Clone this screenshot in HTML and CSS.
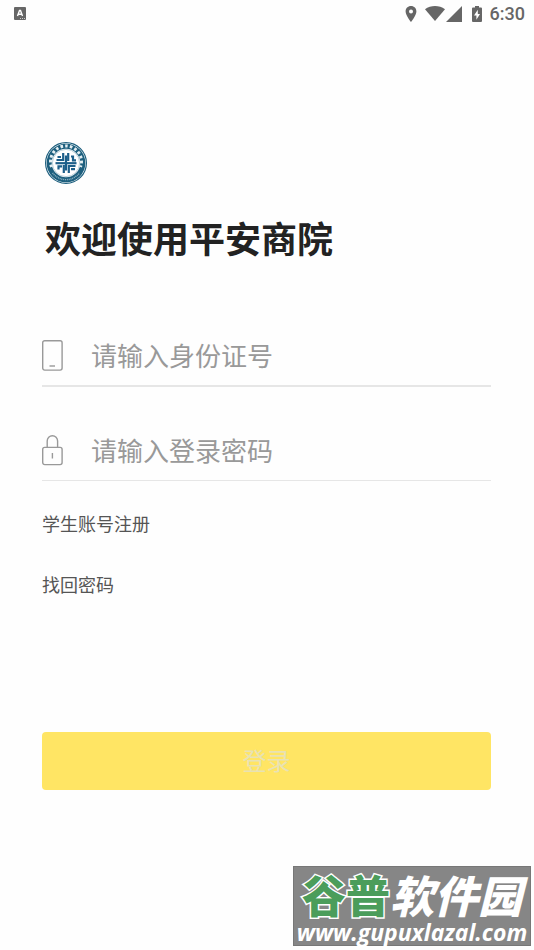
FILE: index.html
```
<!DOCTYPE html>
<html lang="zh-CN">
<head>
    <meta charset="UTF-8">
    <meta name="viewport" content="width=device-width, initial-scale=1.0">
    <title>平安商院</title>
    <link rel="stylesheet" href="styles.css">
</head>
<body>
    <!-- 状态栏 -->
    <header class="status-bar">
        <svg class="status-app" width="12" height="13" viewBox="0 0 12 13">
            <rect width="12" height="13" rx="1" fill="#666"/>
            <path d="M3.5 9 L5.5 3.5 H6.5 L8.5 9 M4.5 7.2 H7.5" fill="none" stroke="#fff" stroke-width="1.4"/>
            <path d="M6 11.5 H11" stroke="#ccc" stroke-width="1" stroke-dasharray="1 1"/>
        </svg>
        <div class="status-icons">
            <svg width="12" height="16" viewBox="0 0 12 16">
                <path d="M6 0 C2.8 0 .6 2.4 .6 5.4 C.6 9.4 6 16 6 16 S11.4 9.4 11.4 5.4 C11.4 2.4 9.2 0 6 0 Z M6 3.4 A2 2 0 1 1 6 7.4 A2 2 0 1 1 6 3.4 Z" fill="#666" fill-rule="evenodd"/>
            </svg>
            <svg class="wifi" width="20" height="15" viewBox="0 0 20 15">
                <path d="M0 3.2 C5.8 -1 14.2 -1 20 3.2 L10 15 Z" fill="#666"/>
            </svg>
            <svg class="signal" width="16" height="16" viewBox="0 0 16 16">
                <path d="M16 0 V16 H0 Z" fill="#666"/>
            </svg>
            <svg class="battery" width="10" height="16" viewBox="0 0 10 16">
                <path d="M3 0 H7 V1.6 H9 Q10 1.6 10 2.6 V15 Q10 16 9 16 H1 Q0 16 0 15 V2.6 Q0 1.6 1 1.6 H3 Z" fill="#666"/>
                <path d="M5.8 3.8 L2 9.6 H4.4 V13.8 L8 8 H5.8 Z" fill="#fff"/>
            </svg>
            <span class="clock">6:30</span>
        </div>
    </header>

    <main class="login">
        <!-- 校徽 -->
        <svg class="logo" width="42" height="42" viewBox="0 0 42 42">
            <circle cx="21" cy="21" r="20.4" fill="#fff" stroke="#1d5f7e" stroke-width="1.2"/>
            <circle cx="21" cy="21" r="16.8" fill="none" stroke="#1d5f7e" stroke-width="5"/>
            <path d="M6.5 26 A15.5 15.5 0 1 1 35.5 26" transform="translate(0 -1)" fill="none" stroke="#e4eef2" stroke-width="3" stroke-dasharray="2.6 2.2"/>
            <path d="M7.6 31 A16.8 16.8 0 0 0 34.4 31" fill="none" stroke="#8fb2c2" stroke-width="1.4" stroke-dasharray="1 .8"/>
            <circle cx="21" cy="21" r="13.6" fill="#fff" stroke="#8fb2c2" stroke-width=".6"/>
            <g fill="none" stroke="#1d5f8a" stroke-width="2.2">
                <path d="M18.2 11 V18 H11.5"/>
                <path d="M23.8 31 V24 H30.5"/>
                <path d="M23.2 11 V19 M18.8 23 V31"/>
                <path d="M10.5 21.2 H31.5"/>
                <path d="M12.5 15 H16 M26 14.5 H28 V18.4 H31 M13.5 27.5 V24.4 H17 M26 27.2 H30"/>
                <path d="M21 13.5 V28.5"/>
            </g>
        </svg>

        <h1 class="title">欢迎使用平安商院</h1>

        <form class="login-form">
            <div class="field">
                <label for="id-card" aria-label="身份证号">
                    <svg width="21" height="31" viewBox="0 0 21 31" fill="none" stroke="#999" stroke-width="1.4">
                        <rect x=".7" y=".7" width="19.4" height="29.4" rx="2"/>
                        <path d="M7.5 26 H13"/>
                    </svg>
                </label>
                <input type="text" id="id-card" placeholder="请输入身份证号">
            </div>
            <div class="field field-password">
                <label for="password" aria-label="登录密码">
                    <svg width="21" height="31" viewBox="0 0 21 31" fill="none" stroke="#999" stroke-width="1.4">
                        <rect x=".7" y="12.4" width="19.4" height="17.2" rx="2"/>
                        <path d="M5.2 12.4 V6 A5.2 5.2 0 0 1 15.6 6 V12.4"/>
                        <path d="M10.4 18 V23.5"/>
                    </svg>
                </label>
                <input type="password" id="password" placeholder="请输入登录密码">
            </div>

            <nav class="links">
                <a href="#register">学生账号注册</a>
                <a href="#forgot">找回密码</a>
            </nav>

            <button type="submit" class="login-btn">登录</button>
        </form>
    </main>

    <!-- 水印 -->
    <aside class="watermark">
        <div class="mark-name"><span class="mark-green">谷普</span><span class="mark-white">软件园</span></div>
        <div class="mark-url">www.gupuxlazal.com</div>
    </aside>
</body>
</html>
```
FILE: styles.css
```
* {
    margin: 0;
    padding: 0;
    box-sizing: border-box;
}

body {
    min-height: 100vh;
    position: relative;
    background: #fefefe;
    color: #222;
    font-family: Roboto, "Noto Sans CJK SC", sans-serif;
}

svg {
    display: block;
}

/* 状态栏 */
.status-bar {
    display: flex;
    align-items: center;
    justify-content: space-between;
    height: 27px;
    padding: 0 9px 0 14px;
}

.status-icons {
    display: flex;
    align-items: center;
}

.wifi {
    margin-left: 8px;
}

.signal {
    margin-left: 1px;
}

.battery {
    margin-left: 10px;
}

.clock {
    margin-left: 8px;
    font-size: 18px;
    font-weight: 500;
    line-height: 28px;
    color: #666;
}

/* 登录 */
.login {
    padding: 115px 43px 150px 42px;
}

.logo {
    margin-left: 3px;
}

.title {
    margin: 31px 0 0 3px;
    font-size: 36px;
    font-weight: 700;
    line-height: 52px;
    color: #222;
}

.login-form {
    margin-top: 59px;
}

.field {
    display: flex;
    align-items: center;
    height: 61px;
    border-bottom: 2px solid #e6e6e6;
}

.field-password {
    margin-top: 34px;
    height: 60px;
    border-bottom-width: 1px;
}

.field input {
    flex: 1;
    min-width: 0;
    height: 42px;
    margin-left: 28px;
    padding-top: 2px;
    border: none;
    outline: none;
    background: transparent;
    font-family: inherit;
    font-size: 26px;
    color: #222;
}

.field input::placeholder {
    color: #999;
    opacity: 1;
}

.links {
    display: flex;
    flex-direction: column;
    align-items: flex-start;
    gap: 33px;
    margin-top: 30px;
}

.links a {
    font-size: 18px;
    line-height: 28px;
    color: #555;
    text-decoration: none;
}

.login-btn {
    display: block;
    width: 100%;
    height: 58px;
    margin-top: 132px;
    padding-bottom: 3px;
    border: none;
    border-radius: 4px;
    background: #ffe564;
    color: #e8e2b4;
    font-family: inherit;
    font-size: 24px;
    cursor: pointer;
}

/* 水印 */
.watermark {
    position: absolute;
    right: 3px;
    bottom: 4px;
    width: 238px;
    height: 80px;
    border: 1px solid #777;
    background: #868686;
    color: #fff;
    text-align: center;
    white-space: nowrap;
}

.mark-name {
    font-family: "Noto Sans CJK SC", sans-serif;
    font-size: 44px;
    font-weight: 900;
    line-height: 54px;
}

.mark-green {
    color: #4b9d5b;
    -webkit-text-stroke: 3px #fff;
    paint-order: stroke fill;
}

.mark-white {
    font-style: italic;
}

.mark-url {
    font-family: "Open Sans", sans-serif;
    font-size: 23px;
    font-weight: 700;
    font-style: italic;
    line-height: 22px;
}
```
